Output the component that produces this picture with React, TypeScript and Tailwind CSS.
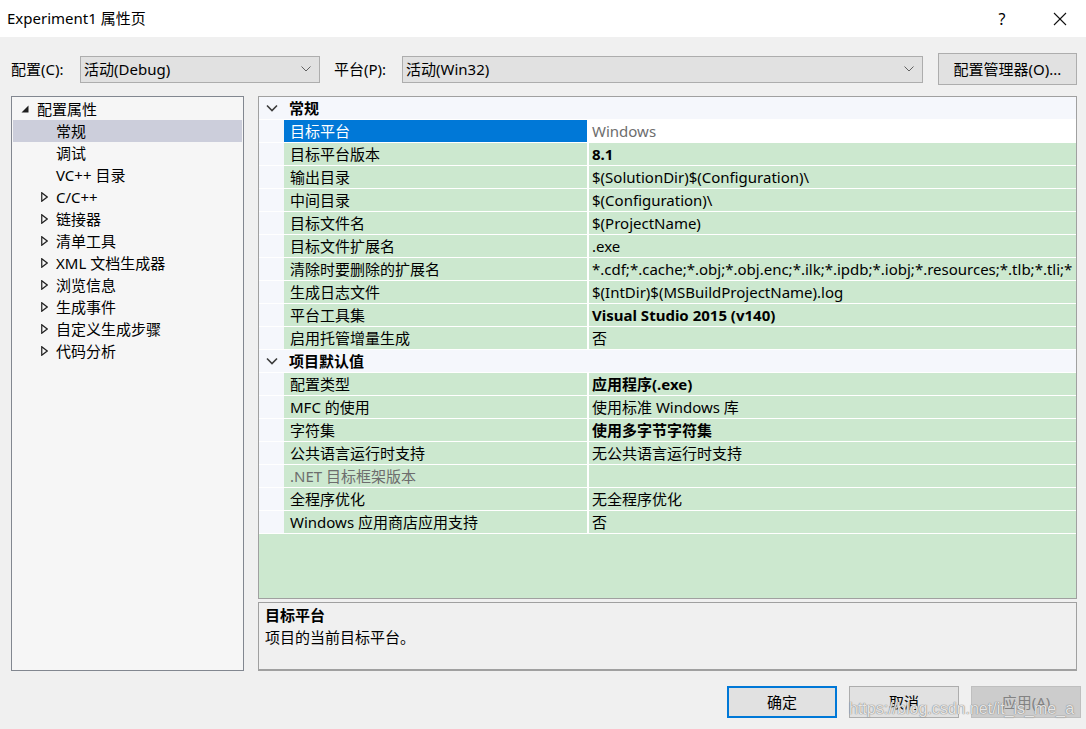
import React from 'react';

type Prop = { name: string; value: string; bold?: boolean; selected?: boolean; dim?: boolean };

const general: Prop[] = [
  { name: '目标平台', value: 'Windows', selected: true },
  { name: '目标平台版本', value: '8.1', bold: true },
  { name: '输出目录', value: '$(SolutionDir)$(Configuration)\\' },
  { name: '中间目录', value: '$(Configuration)\\' },
  { name: '目标文件名', value: '$(ProjectName)' },
  { name: '目标文件扩展名', value: '.exe' },
  { name: '清除时要删除的扩展名', value: '*.cdf;*.cache;*.obj;*.obj.enc;*.ilk;*.ipdb;*.iobj;*.resources;*.tlb;*.tli;*' },
  { name: '生成日志文件', value: '$(IntDir)$(MSBuildProjectName).log' },
  { name: '平台工具集', value: 'Visual Studio 2015 (v140)', bold: true },
  { name: '启用托管增量生成', value: '否' },
];

const defaults: Prop[] = [
  { name: '配置类型', value: '应用程序(.exe)', bold: true },
  { name: 'MFC 的使用', value: '使用标准 Windows 库' },
  { name: '字符集', value: '使用多字节字符集', bold: true },
  { name: '公共语言运行时支持', value: '无公共语言运行时支持' },
  { name: '.NET 目标框架版本', value: '', dim: true },
  { name: '全程序优化', value: '无全程序优化' },
  { name: 'Windows 应用商店应用支持', value: '否' },
];

const treeChildren = ['常规', '调试', 'VC++ 目录'];
const treeCollapsed = ['C/C++', '链接器', '清单工具', 'XML 文档生成器', '浏览信息', '生成事件', '自定义生成步骤', '代码分析'];

const Chevron: React.FC<{ className?: string }> = ({ className }) => (
  <svg width="10" height="6" viewBox="0 0 10 6" className={className}>
    <polyline points="0.5,0.5 5,5 9.5,0.5" fill="none" stroke="currentColor" strokeWidth="1" />
  </svg>
);

const Combo: React.FC<{ text: string; width: string }> = ({ text, width }) => (
  <div className={`${width} h-[27px] bg-[#e1e1e1] border border-[#adadad] flex items-center pl-[3px] pr-[8px]`}>
    <span className="flex-1">{text}</span>
    <Chevron className="text-[#606060]" />
  </div>
);

const Category: React.FC<{ title: string }> = ({ title }) => (
  <div className="h-[23px] bg-[#f5f7fc] flex items-center border-b border-white">
    <svg width="12" height="8" viewBox="0 0 12 8" className="ml-[7px] mr-[11px] text-[#3c3c3c]">
      <polyline points="1,1.5 6,6.5 11,1.5" fill="none" stroke="currentColor" strokeWidth="1.6" />
    </svg>
    <span className="font-bold">{title}</span>
  </div>
);

const Row: React.FC<{ p: Prop }> = ({ p }) => (
  <div className="h-[23px] flex border-b border-white">
    <div className="w-[25px] bg-[#f5f7fc]" />
    <div
      className={`w-[305px] flex items-center pl-[6px] border-r-2 border-white ${
        p.selected ? 'bg-[#0078d7] text-white' : p.dim ? 'text-[#6d6d6d]' : ''
      }`}
    >
      {p.name}
    </div>
    <div
      className={`flex-1 min-w-0 flex items-center pl-[3px] whitespace-nowrap overflow-hidden ${
        p.selected ? 'bg-white text-[#6d6d6d]' : ''
      } ${p.bold ? 'font-bold' : ''}`}
    >
      {p.value}
    </div>
  </div>
);

const App: React.FC = () => {
  return (
    <div className="w-[1086px] h-[729px] bg-[#f0f0f0] flex flex-col text-[15px] text-black font-['Noto_Sans','Noto_Sans_CJK_SC',sans-serif] leading-none relative overflow-hidden">
      {/* title bar */}
      <div className="h-[37px] bg-white flex items-center pl-[7px]">
        <span className="flex-1">Experiment1 属性页</span>
        <span className="w-[14px] text-center mr-[44px] text-[16px]">?</span>
        <svg width="14" height="14" viewBox="0 0 14 14" className="mr-[19px]">
          <line x1="1" y1="1" x2="13" y2="13" stroke="#111" strokeWidth="1.1" />
          <line x1="13" y1="1" x2="1" y2="13" stroke="#111" strokeWidth="1.1" />
        </svg>
      </div>

      {/* configuration row */}
      <div className="mt-[16px] h-[32px] flex items-center pl-[11px]">
        <span className="w-[69px]">配置(C):</span>
        <Combo text="活动(Debug)" width="w-[240px]" />
        <span className="ml-[14px] w-[68px]">平台(P):</span>
        <Combo text="活动(Win32)" width="w-[521px]" />
        <div className="ml-[15px] w-[139px] h-[32px] bg-[#e1e1e1] border border-[#adadad] flex items-center justify-center">
          配置管理器(O)...
        </div>
      </div>

      {/* main */}
      <div className="mt-[11px] flex pl-[11px] h-[575px]">
        <div className="w-[233px] h-[575px] border border-[#828790] bg-[#f6f6f6] pt-[1px]">
          <div className="h-[22px] flex items-center">
            <svg width="8" height="8" viewBox="0 0 8 8" className="ml-[9px] mr-[8px]">
              <polygon points="7.5,0.5 7.5,7.5 0.5,7.5" fill="#1e1e1e" />
            </svg>
            <span>配置属性</span>
          </div>
          {treeChildren.map((t, i) => (
            <div key={t} className={`h-[22px] mx-[1px] flex items-center pl-[43px] ${i === 0 ? 'bg-[#cccedb]' : ''}`}>
              {t}
            </div>
          ))}
          {treeCollapsed.map((t) => (
            <div key={t} className="h-[22px] flex items-center">
              <svg width="7" height="10" viewBox="0 0 7 10" className="ml-[29px] mr-[8px]">
                <polygon points="0.75,0.75 6.25,5 0.75,9.25" fill="none" stroke="#1e1e1e" strokeWidth="1.2" />
              </svg>
              <span>{t}</span>
            </div>
          ))}
        </div>

        <div className="ml-[14px] w-[819px] flex flex-col">
          <div className="h-[504px] border border-[#a0a0a0] bg-[#cce8cf] flex flex-col overflow-hidden">
            <Category title="常规" />
            {general.map((p) => (
              <Row key={p.name} p={p} />
            ))}
            <Category title="项目默认值" />
            {defaults.map((p) => (
              <Row key={p.name} p={p} />
            ))}
          </div>
          <div className="mt-[3px] h-[69px] border border-[#a0a0a0] border-b-2 pl-[6px] pt-[2px]">
            <div className="font-bold h-[20px] flex items-center">目标平台</div>
            <div className="h-[24px] flex items-center">项目的当前目标平台。</div>
          </div>
        </div>
      </div>

      {/* buttons */}
      <div className="mt-[15px] flex pl-[727px] gap-[12px]">
        <div className="w-[110px] h-[32px] bg-[#e1e1e1] border-2 border-[#0078d7] flex items-center justify-center">确定</div>
        <div className="w-[110px] h-[32px] bg-[#e1e1e1] border border-[#adadad] flex items-center justify-center">取消</div>
        <div className="w-[110px] h-[32px] bg-[#cccccc] border border-[#bfbfbf] text-[#838383] flex items-center justify-center shrink-0">
          应用(A)
        </div>
      </div>

      {/* watermark */}
      <div className="absolute left-[849px] top-[701px] text-[16px] whitespace-nowrap font-['Liberation_Sans',sans-serif] text-white/80 [text-shadow:0_0_1px_#7a7a7a,0_0_1px_#7a7a7a]">
        https://blog.csdn.net/it_is_me_a
      </div>
    </div>
  );
};

export default App;
